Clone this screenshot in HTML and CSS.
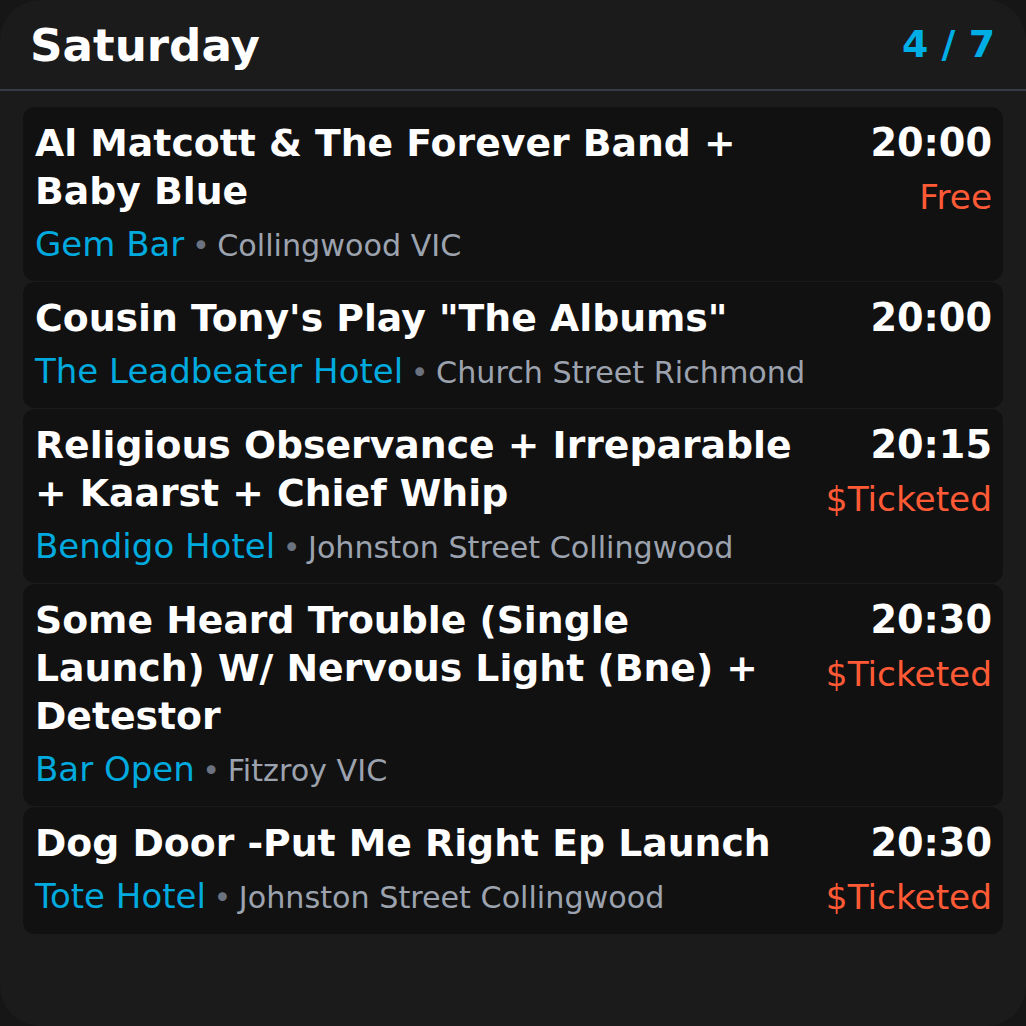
FILE: index.html
```html
<!DOCTYPE html>
<html lang="en">
<head>
<meta charset="utf-8">
<title>Saturday gigs</title>
<link rel="stylesheet" href="styles.css">
</head>
<body>
<div class="app">
  <header class="header">
    <h1 class="day">Saturday</h1>
    <div class="count">4 / 7</div>
  </header>
  <main class="list">
    <article class="card">
      <div class="main">
        <h2 class="title">Al Matcott &amp; The Forever Band + Baby Blue</h2>
        <p class="where"><span class="venue">Gem Bar</span><span class="loc"><span class="dot">•</span>Collingwood VIC</span></p>
      </div>
      <div class="side">
        <div class="time">20:00</div>
        <div class="price">Free</div>
      </div>
    </article>
    <article class="card">
      <div class="main">
        <h2 class="title">Cousin Tony's Play "The Albums"</h2>
        <p class="where"><span class="venue">The Leadbeater Hotel</span><span class="loc"><span class="dot">•</span>Church Street Richmond</span></p>
      </div>
      <div class="side">
        <div class="time">20:00</div>
      </div>
    </article>
    <article class="card">
      <div class="main">
        <h2 class="title">Religious Observance + Irreparable + Kaarst + Chief Whip</h2>
        <p class="where"><span class="venue">Bendigo Hotel</span><span class="loc"><span class="dot">•</span>Johnston Street Collingwood</span></p>
      </div>
      <div class="side">
        <div class="time">20:15</div>
        <div class="price">$Ticketed</div>
      </div>
    </article>
    <article class="card">
      <div class="main">
        <h2 class="title">Some Heard Trouble (Single Launch) W/ Nervous Light (Bne) + Detestor</h2>
        <p class="where"><span class="venue">Bar Open</span><span class="loc"><span class="dot">•</span>Fitzroy VIC</span></p>
      </div>
      <div class="side">
        <div class="time">20:30</div>
        <div class="price">$Ticketed</div>
      </div>
    </article>
    <article class="card">
      <div class="main">
        <h2 class="title">Dog Door -Put Me Right Ep Launch</h2>
        <p class="where"><span class="venue">Tote Hotel</span><span class="loc"><span class="dot">•</span>Johnston Street Collingwood</span></p>
      </div>
      <div class="side">
        <div class="time">20:30</div>
        <div class="price">$Ticketed</div>
      </div>
    </article>
  </main>
</div>
</body>
</html>
```

FILE: styles.css
```css
* { box-sizing: border-box; }

html, body {
  margin: 0;
  padding: 0;
  background: #161616;
}

body {
  font-family: "DejaVu Sans", "Liberation Sans", sans-serif;
  color: #ffffff;
}

.app {
  width: 1026px;
  height: 1026px;
  background: #1b1b1b;
  border-radius: 40px;
  overflow: hidden;
}

.header {
  height: 91px;
  padding: 0 31px 0 30px;
  display: flex;
  align-items: center;
  justify-content: space-between;
  border-bottom: 2px solid #363c47;
}

.day {
  margin: 0;
  padding-top: 4px;
  font-size: 45.2px;
  font-weight: 700;
  line-height: 1.164;
  color: #ffffff;
}

.count {
  font-size: 37.9px;
  font-weight: 700;
  color: #00aee6;
  line-height: 1.164;
}

.list {
  padding: 16px 23px 0;
  display: flex;
  flex-direction: column;
  gap: 1px;
}

.card {
  background: #111111;
  border-radius: 12px;
  padding: 12px 11px 12px 12px;
  display: flex;
  align-items: flex-start;
}

.main {
  width: 772px;
  flex-shrink: 0;
}

.title {
  margin: 0;
  font-size: 37.75px;
  font-weight: 700;
  line-height: 48px;
  color: #ffffff;
}

.where {
  margin: 4px 0 0;
  font-size: 34px;
  line-height: 50px;
  white-space: nowrap;
}

.venue {
  color: #00aadf;
}

.loc {
  font-size: 30.2px;
  line-height: 1;
  color: #9ca3af;
}

.dot {
  color: #6b7280;
  margin: 0 0.25em;
}

.side {
  flex: 1;
  display: flex;
  flex-direction: column;
  align-items: flex-end;
}

.time {
  font-size: 38.2px;
  font-weight: 700;
  line-height: 48px;
  color: #ffffff;
}

.price {
  margin-top: 5px;
  font-size: 34.3px;
  line-height: 50px;
  color: #ff5a36;
}
```
